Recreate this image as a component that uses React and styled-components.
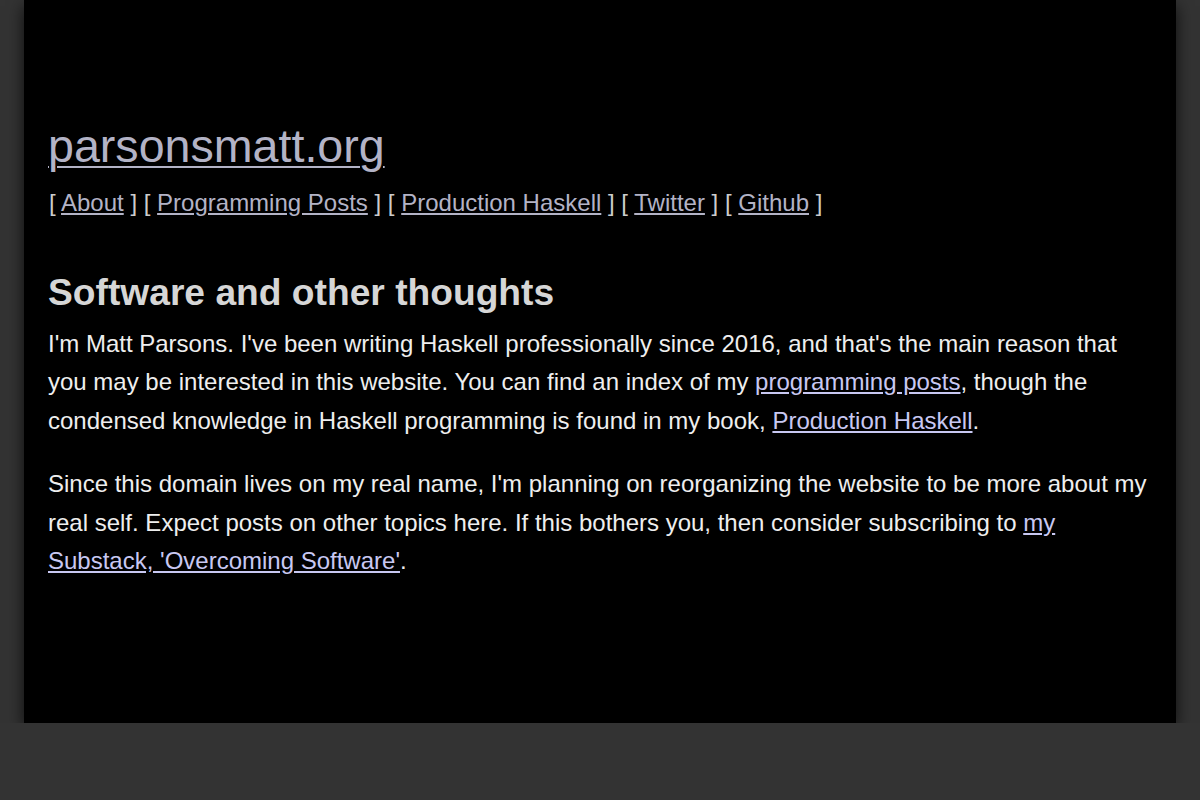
import styled, { createGlobalStyle } from "styled-components";

const GlobalStyle = createGlobalStyle`
  html, body {
    margin: 0;
    padding: 0;
    background: #333333;
  }
  body {
    font-family: "Liberation Sans", Arial, sans-serif;
    color: #eeeeee;
  }
`;

const Page = styled.div`
  margin: 0 24px;
  min-height: 723px;
  box-sizing: border-box;
  background: #000000;
  box-shadow: 0 6px 16px rgba(0, 0, 0, 0.75);
  padding: 120px 24px 40px;
`;

const Header = styled.header`
  display: flex;
  flex-direction: column;
  gap: 10px;
`;

const Logo = styled.a`
  font-size: 46.6px;
  line-height: 1.15;
  color: #b3b3c6;
  text-decoration: underline;
  text-underline-offset: 4px;
  text-decoration-thickness: 2px;
  width: fit-content;
`;

const Nav = styled.nav`
  font-size: 24px;
  line-height: 38.5px;
  color: #cccccc;
  padding-left: 1px;
`;

const NavLink = styled.a`
  color: #b3b3c6;
  text-decoration: underline;
`;

const Heading = styled.h2`
  font-size: 37.2px;
  font-weight: bold;
  color: #d6d6d6;
  line-height: 1.2;
  margin: 48px 0 10px;
`;

const Para = styled.p`
  font-size: 24px;
  line-height: 38.5px;
  color: #eeeeee;
  margin: 0 0 25px;
`;

const TextLink = styled.a`
  color: #c8c8f2;
  text-decoration: underline;
`;

const navItems = [
  "About",
  "Programming Posts",
  "Production Haskell",
  "Twitter",
  "Github",
];

export default function App() {
  return (
    <>
      <GlobalStyle />
      <Page>
        <Header>
          <Logo href="#">parsonsmatt.org</Logo>
          <Nav>
            {navItems.map((item, i) => (
              <span key={item}>
                {i > 0 && " "}[ <NavLink href="#">{item}</NavLink> ]
              </span>
            ))}
          </Nav>
        </Header>
        <main>
          <Heading>Software and other thoughts</Heading>
          <Para>
            I'm Matt Parsons. I've been writing Haskell professionally since
            2016, and that's the main reason that you may be interested in this
            website. You can find an index of my{" "}
            <TextLink href="#">programming posts</TextLink>, though the
            condensed knowledge in Haskell programming is found in my book,{" "}
            <TextLink href="#">Production Haskell</TextLink>.
          </Para>
          <Para>
            Since this domain lives on my real name, I'm planning on
            reorganizing the website to be more about my real self. Expect posts
            on other topics here. If this bothers you, then consider subscribing
            to{" "}
            <TextLink href="#">my Substack, 'Overcoming Software'</TextLink>.
          </Para>
        </main>
      </Page>
    </>
  );
}
